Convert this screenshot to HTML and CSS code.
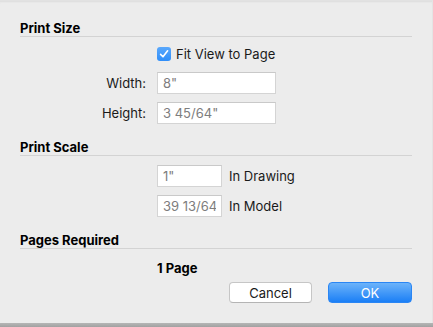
FILE: index.html
```html
<!DOCTYPE html>
<html lang="en">
<head>
  <meta charset="UTF-8">
  <title>Print Setup</title>
  <link rel="stylesheet" href="styles.css">
</head>
<body>

  <div class="dialog">

    <!-- Print Size -->
    <h2 class="section-title">Print Size</h2>
    <div class="form-grid size-grid">
      <span></span>
      <label class="check">
        <span class="check-box">
          <svg width="10" height="10" viewBox="0 0 10 10"><path d="M1.6 5.4 L4 7.8 L8.6 1.8" fill="none" stroke="#fff" stroke-width="1.6" stroke-linecap="round" stroke-linejoin="round"/></svg>
        </span>
        Fit View to Page
      </label>

      <span class="field-label">Width:</span>
      <input class="field wide" type="text" value="8&quot;">

      <span class="field-label">Height:</span>
      <input class="field wide" type="text" value="3 45/64&quot;">
    </div>

    <!-- Print Scale -->
    <h2 class="section-title">Print Scale</h2>
    <div class="form-grid scale-grid">
      <span></span>
      <div class="scale-row">
        <input class="field narrow" type="text" value="1&quot;">
        <span>In Drawing</span>
      </div>

      <span></span>
      <div class="scale-row">
        <input class="field narrow" type="text" value="39 13/64">
        <span>In Model</span>
      </div>
    </div>

    <!-- Pages Required -->
    <h2 class="section-title">Pages Required</h2>
    <div class="form-grid pages-grid">
      <span></span>
      <strong class="page-count">1 Page</strong>
    </div>

    <div class="actions">
      <button class="btn">Cancel</button>
      <button class="btn primary">OK</button>
    </div>

  </div>
  <div class="under"></div>

</body>
</html>
```

FILE: styles.css
```css
:root {
  --bg: #ececec;
  --line: #d3d3d3;
  --field-border: #d4d4d4;
  --field-text: #7d7d7d;
  --blue: #3c97fb;
}

* {
  box-sizing: border-box;
}

html, body {
  margin: 0;
  padding: 0;
  background: #a3a3a3;
}

body {
  font-family: "Inter", "Liberation Sans", sans-serif;
  font-size: 13px;
  color: #1a1a1a;
}

.dialog {
  height: 323px;
  background: var(--bg);
  padding: 3px 20px 0;
  border-top: 1px solid #e2e2e2;
  box-shadow: inset 0 2px 2px -1px #dcdcdc;
  border-right: 1px solid #e4e4e4;
}

.under {
  height: 4px;
  background: linear-gradient(#b6b6b6, #a1a1a1);
}

.section-title {
  margin: 16px 0 0;
  font-size: 13px;
  font-weight: 700;
  line-height: 16px;
  color: #000;
  border-bottom: 1px solid var(--line);
}

.form-grid {
  display: grid;
  grid-template-columns: 126px 1fr;
  column-gap: 11px;
  align-items: center;
}

.size-grid {
  margin-top: 9px;
  row-gap: 8px;
}

.scale-grid {
  margin-top: 9px;
  row-gap: 8px;
}

.pages-grid {
  margin-top: 11px;
}

.section-title + .size-grid + .section-title,
.scale-grid + .section-title {
  margin-top: 15px;
}

.field-label {
  text-align: right;
  color: #1a1a1a;
}

.check {
  display: flex;
  align-items: center;
  gap: 5px;
  height: 15px;
  margin-bottom: 3px;
}

.check-box {
  width: 14px;
  height: 14px;
  border-radius: 3px;
  background: linear-gradient(#5aa8fc, #2f8ef9);
  display: flex;
  align-items: center;
  justify-content: center;
}

.field {
  font-family: inherit;
  font-size: 13px;
  color: var(--field-text);
  height: 22px;
  padding: 0 5px;
  border: 1px solid var(--field-border);
  border-top-color: #c9c9c9;
  background: #fff;
  outline: none;
  margin: 0;
}

.wide {
  width: 119px;
}

.narrow {
  width: 65px;
}

.scale-row {
  display: flex;
  align-items: center;
  gap: 7px;
}

.page-count {
  line-height: 16px;
  color: #000;
}

.actions {
  display: flex;
  justify-content: flex-end;
  gap: 16px;
  margin-top: 6px;
}

.btn {
  font-family: inherit;
  font-size: 13px;
  width: 83px;
  height: 21px;
  border-radius: 4px;
  border: 1px solid #c6c6c6;
  border-bottom-color: #b4b4b4;
  background: #fff;
  color: #1a1a1a;
  padding: 0;
  cursor: pointer;
}

.btn.primary {
  width: 84px;
  border: 1px solid #2a86f4;
  background: linear-gradient(#6cb3fa, #1b7ff6);
  color: #fff;
}
```
